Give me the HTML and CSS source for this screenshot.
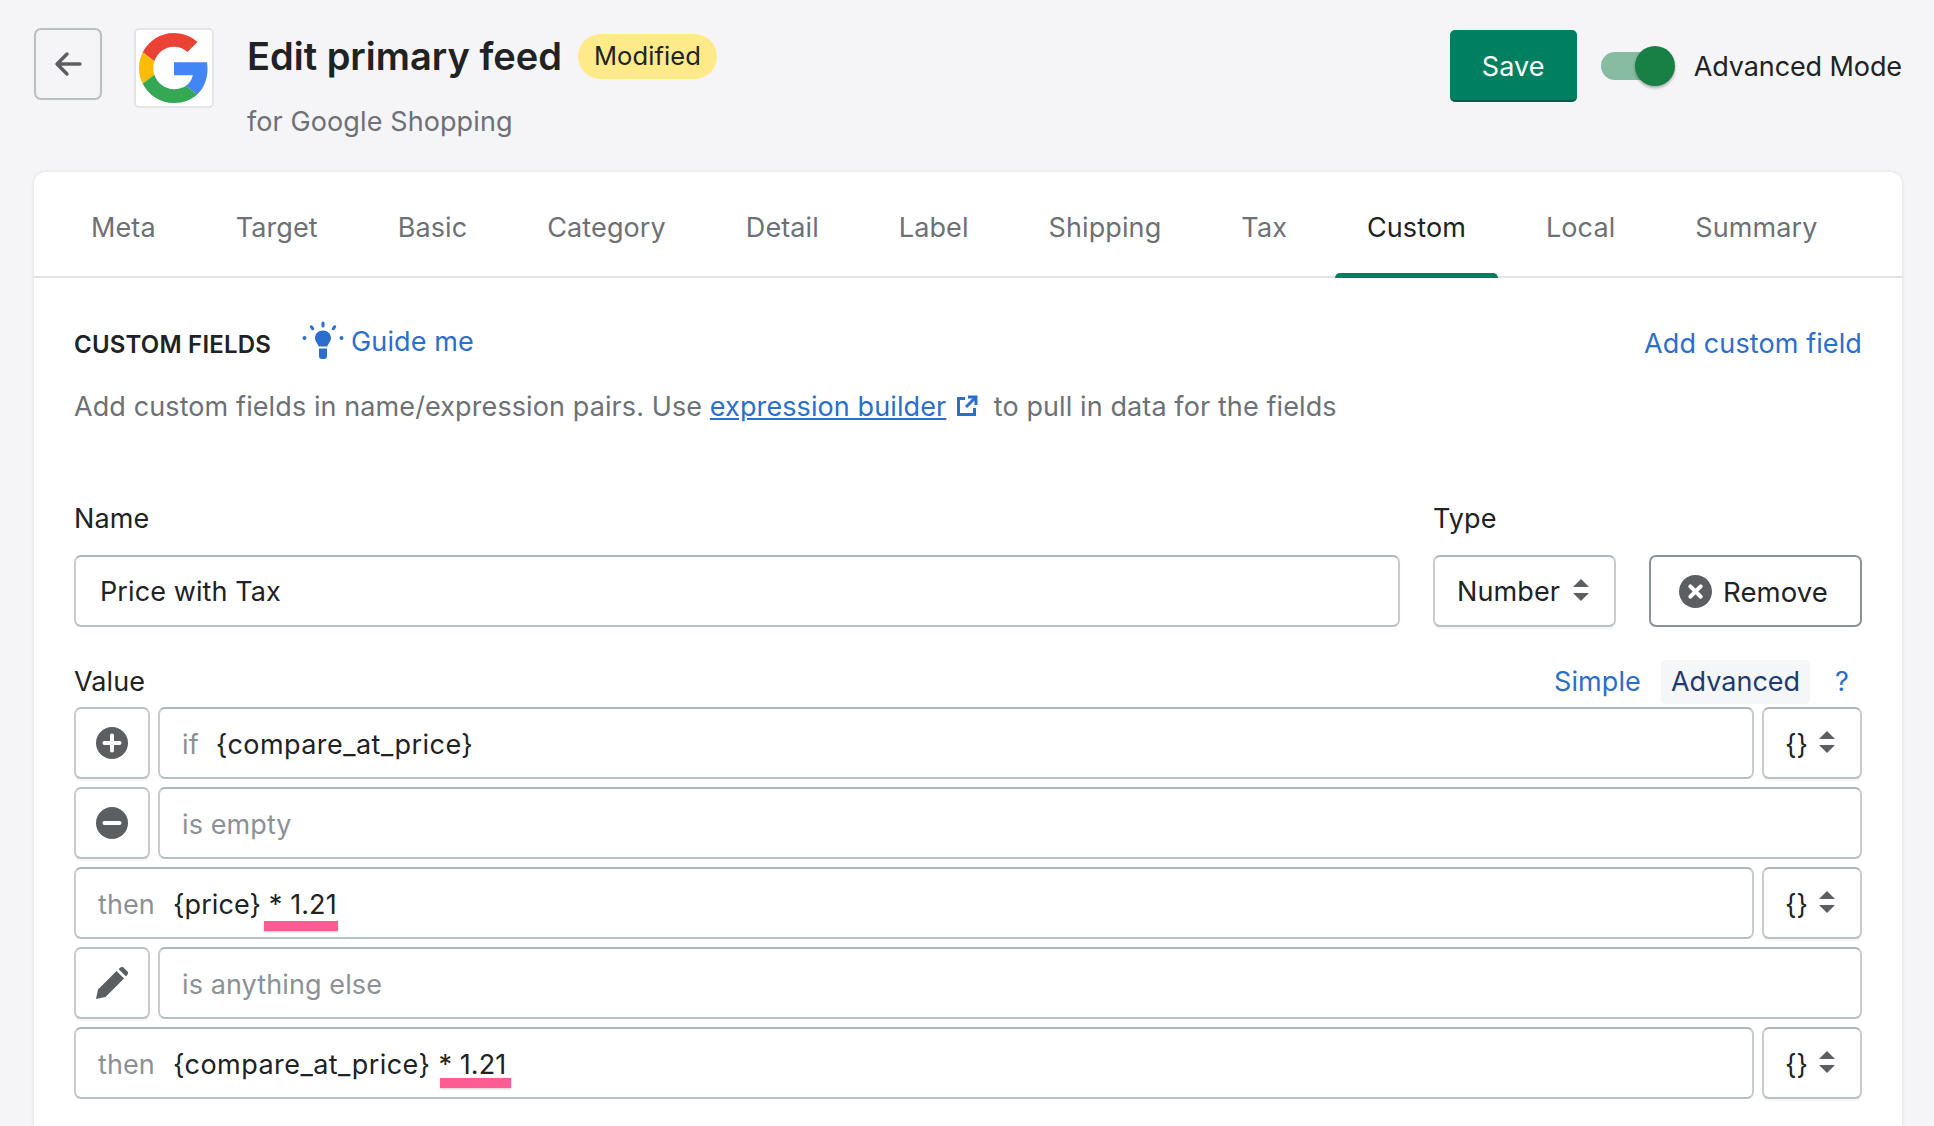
FILE: index.html
```html
<!DOCTYPE html>
<html lang="en">
<head>
    <meta charset="UTF-8">
    <meta name="viewport" content="width=device-width, initial-scale=1.0">
    <title>Edit primary feed</title>
    <link rel="stylesheet" href="styles.css">
</head>
<body>

    <header class="top">
        <button class="back">
            <svg viewBox="0 0 32 32" width="32" height="32"><path d="M28 16H6M15 6L5 16l10 10" fill="none" stroke="#5c5f62" stroke-width="3.4" stroke-linecap="round" stroke-linejoin="round"/></svg>
        </button>
        <div class="logo">
            <svg viewBox="0 0 48 48" width="70" height="70">
                <path fill="#EA4335" d="M24 9.5c3.54 0 6.71 1.22 9.21 3.6l6.85-6.85C35.9 2.38 30.47 0 24 0 14.62 0 6.51 5.38 2.56 13.22l7.98 6.19C12.43 13.72 17.74 9.5 24 9.5z"/>
                <path fill="#4285F4" d="M46.98 24.55c0-1.57-.15-3.09-.38-4.55H24v9.02h12.94c-.58 2.96-2.26 5.48-4.78 7.18l7.73 6c4.51-4.18 7.09-10.36 7.09-17.65z"/>
                <path fill="#FBBC05" d="M10.53 28.59c-.48-1.45-.76-2.99-.76-4.59s.27-3.14.76-4.59l-7.98-6.19C.92 16.46 0 20.12 0 24c0 3.88.92 7.54 2.56 10.78l7.97-6.19z"/>
                <path fill="#34A853" d="M24 48c6.48 0 11.93-2.13 15.89-5.81l-7.73-6c-2.15 1.45-4.92 2.3-8.16 2.3-6.26 0-11.57-4.22-13.47-9.91l-7.98 6.19C6.51 42.62 14.62 48 24 48z"/>
            </svg>
        </div>
        <div class="heading">
            <div class="title-row">
                <h1>Edit primary feed</h1>
                <span class="badge">Modified</span>
            </div>
            <div class="subtitle">for Google Shopping</div>
        </div>
        <div class="actions">
            <button class="save">Save</button>
            <div class="toggle"><span class="track"></span><span class="knob"></span></div>
            <span class="mode">Advanced Mode</span>
        </div>
    </header>

    <main class="card">
        <nav class="tabs">
            <a class="tab">Meta</a>
            <a class="tab">Target</a>
            <a class="tab">Basic</a>
            <a class="tab">Category</a>
            <a class="tab">Detail</a>
            <a class="tab">Label</a>
            <a class="tab">Shipping</a>
            <a class="tab">Tax</a>
            <a class="tab active">Custom</a>
            <a class="tab">Local</a>
            <a class="tab">Summary</a>
        </nav>

        <section class="content">
            <div class="section-head">
                <h2>Custom fields</h2>
                <a class="guide">
                    <svg viewBox="0 0 42 42" width="42" height="42" fill="#2c6ecb">
                        <path d="M21 9.500c-4.600 0-8 3.400-8 7.600 0 3.400 2.600 5 3.600 8.400h8.800c1-3.400 3.600-5 3.600-8.400 0-4.200-3.400-7.600-8-7.600z"/>
                        <path d="M17 27.500h8v7.500a3 3 0 0 1-3 3h-2a3 3 0 0 1-3-3z"/>
                        <rect x="19.500" y="0.500" width="3" height="6" rx="1.500"/>
                        <rect x="8.500" y="4" width="3" height="5.500" rx="1.500" transform="rotate(-35 10 6.700)"/>
                        <rect x="30.500" y="4" width="3" height="5.500" rx="1.500" transform="rotate(35 32 6.700)"/>
                        <circle cx="2.500" cy="17" r="2"/>
                        <circle cx="39.500" cy="17" r="2"/>
                    </svg>
                    Guide me
                </a>
                <a class="add-field">Add custom field</a>
            </div>
            <p class="help">
                Add custom fields in name/expression pairs. Use <a class="builder">expression builder</a>
                <svg class="ext" viewBox="0 0 22 22" width="22" height="22" fill="none" stroke="#2c6ecb" stroke-width="3"><path d="M9 3.500H2.500v16h16V13"/><path d="M12 2h8v8M20 2L10 12"/></svg>
                to pull in data for the fields
            </p>

            <div class="labels">
                <label class="name-label">Name</label>
                <label class="type-label">Type</label>
            </div>
            <div class="name-row">
                <div class="field grow">Price with Tax</div>
                <div class="field select">
                    Number
                    <svg class="carets" viewBox="0 0 16 24" width="16" height="24" fill="#5c5f62"><path d="M8 1l8 8H0zM8 23l8-8H0z"/></svg>
                </div>
                <button class="remove">
                    <svg viewBox="0 0 32 32" width="33" height="33"><circle cx="16" cy="16" r="16" fill="#5c5f62"/><path d="M11 11l10 10M21 11L11 21" stroke="#fff" stroke-width="4" stroke-linecap="round"/></svg>
                    <span class="remove-text">Remove</span>
                </button>
            </div>

            <div class="value-head">
                <label>Value</label>
                <div class="modes">
                    <a class="mode-link">Simple</a>
                    <a class="mode-link current">Advanced</a>
                    <a class="mode-link help-link">?</a>
                </div>
            </div>

            <div class="rows">
                <div class="row">
                    <button class="icon-btn">
                        <svg viewBox="0 0 32 32" width="32" height="32"><circle cx="16" cy="16" r="16" fill="#5c5f62"/><path d="M16 8.500v15M8.500 16h15" stroke="#fff" stroke-width="4" stroke-linecap="round"/></svg>
                    </button>
                    <div class="field grow expr"><span class="muted gap-if">if</span><span class="long-var">{compare_at_price}</span></div>
                    <div class="field brace">{}<svg class="carets" viewBox="0 0 16 24" width="16" height="24" fill="#5c5f62"><path d="M8 1l8 8H0zM8 23l8-8H0z"/></svg></div>
                </div>
                <div class="row">
                    <button class="icon-btn">
                        <svg viewBox="0 0 32 32" width="32" height="32"><circle cx="16" cy="16" r="16" fill="#5c5f62"/><path d="M8.500 16h15" stroke="#fff" stroke-width="4" stroke-linecap="round"/></svg>
                    </button>
                    <div class="field grow expr muted">is empty</div>
                </div>
                <div class="row">
                    <div class="field grow expr"><span class="muted gap-then">then</span>{price} <span class="mark mark-a">* 1.21</span></div>
                    <div class="field brace">{}<svg class="carets" viewBox="0 0 16 24" width="16" height="24" fill="#5c5f62"><path d="M8 1l8 8H0zM8 23l8-8H0z"/></svg></div>
                </div>
                <div class="row">
                    <button class="icon-btn">
                        <svg viewBox="0 0 32 32" width="32" height="32" fill="#5c5f62"><path d="M0 32l2-9.500L20.500 4l7.500 7.500L9.500 30z"/><path d="M22.500 2l2-1.500a2.500 2.500 0 0 1 3 0l4 4a2.500 2.500 0 0 1 0 3l-1.500 2z"/></svg>
                    </button>
                    <div class="field grow expr muted">is anything else</div>
                </div>
                <div class="row">
                    <div class="field grow expr"><span class="muted gap-then">then</span><span class="long-var">{compare_at_price}</span><span class="mark mark-b">* 1.21</span></div>
                    <div class="field brace">{}<svg class="carets" viewBox="0 0 16 24" width="16" height="24" fill="#5c5f62"><path d="M8 1l8 8H0zM8 23l8-8H0z"/></svg></div>
                </div>
            </div>
        </section>
    </main>

</body>
</html>
```

FILE: styles.css
```css
* {
    box-sizing: border-box;
}
html, body {
    height: 100%;
}
body {
    margin: 0;
    display: flex;
    flex-direction: column;
    overflow: hidden;
    background-color: #f5f5f8;
    color: #202223;
    font-family: Inter, "Liberation Sans", sans-serif;
    font-size: 27px;
    letter-spacing: 0.1px;
    line-height: 36px;
}
button {
    font: inherit;
    letter-spacing: inherit;
    color: inherit;
    cursor: pointer;
}

/* Page header */
.top {
    flex: none;
    height: 172px;
    padding: 28px 32px 0 34px;
    display: flex;
    align-items: flex-start;
}
.back {
    width: 68px;
    height: 72px;
    padding: 0;
    display: flex;
    align-items: center;
    justify-content: center;
    background: transparent;
    border: 2px solid #babfc3;
    border-radius: 7px;
}
.logo {
    width: 80px;
    height: 80px;
    margin-left: 32px;
    display: flex;
    align-items: center;
    justify-content: center;
    background: #fff;
    border: 2px solid #e4e5e7;
    border-radius: 5px;
}
.heading {
    margin-left: 33px;
}
.title-row {
    display: flex;
    align-items: center;
    gap: 16px;
    margin-top: 5px;
}
h1 {
    margin: 0;
    font-size: 38px;
    letter-spacing: 0;
    line-height: 46px;
    font-weight: 600;
}
.badge {
    height: 45px;
    padding: 0 16px;
    display: flex;
    align-items: center;
    background: #ffea8a;
    border-radius: 23px;
    font-size: 25.5px;
}
.subtitle {
    margin-top: 25px;
    color: #6d7175;
}
.actions {
    margin-left: auto;
    margin-top: 2px;
    display: flex;
    align-items: center;
}
.save {
    width: 127px;
    height: 72px;
    padding: 3px 0 0;
    color: #fff;
    background: #008060;
    border: none;
    border-bottom: 2px solid #005e46;
    border-radius: 5px;
}
.toggle {
    position: relative;
    width: 74px;
    height: 40px;
    margin-left: 24px;
}
.track {
    position: absolute;
    left: 0;
    top: 6px;
    width: 64px;
    height: 28px;
    background: #87bca1;
    border-radius: 14px;
}
.knob {
    position: absolute;
    right: 0;
    top: 0;
    width: 40px;
    height: 40px;
    background: #188044;
    border-radius: 50%;
    box-shadow: 0 2px 3px rgba(0, 0, 0, 0.3);
}
.mode {
    margin-left: 19px;
    margin-top: 2px;
    letter-spacing: -0.1px;
}

/* Card */
.card {
    flex: 1;
    margin: 0 32px 0 34px;
    background: #fff;
    border-radius: 12px 12px 0 0;
    box-shadow: 0 0 4px rgba(23, 24, 24, 0.1);
}
.tabs {
    height: 106px;
    padding: 8px 25px 0;
    display: flex;
    gap: 16px;
    border-bottom: 2px solid #e1e3e5;
}
.tab {
    position: relative;
    padding: 0 32px;
    display: flex;
    align-items: center;
    color: #6d7175;
}
.tab.active {
    color: #202223;
}
.tab.active::after {
    content: "";
    position: absolute;
    left: 0;
    right: 0;
    bottom: -2px;
    height: 5px;
    background: #008060;
    border-radius: 5px 5px 0 0;
}

/* Section */
.content {
    padding: 43px 40px 0;
}
.section-head {
    height: 46px;
    display: flex;
    align-items: center;
}
h2 {
    margin: 2px 0 0;
    font-size: 24px;
    letter-spacing: 0.2px;
    font-weight: 600;
    text-transform: uppercase;
}
.guide {
    margin-left: 31px;
    margin-top: -5px;
    display: flex;
    align-items: center;
    gap: 7px;
    color: #2c6ecb;
}
.add-field {
    margin-left: auto;
    color: #2c6ecb;
}
.help {
    margin: 22px 0 0;
    color: #6d7175;
}
.builder {
    color: #2c6ecb;
    text-decoration: underline;
}
.ext {
    margin: 0 8px 0 2px;
    vertical-align: -1px;
}
.labels {
    margin-top: 76px;
    display: flex;
}
.name-label {
    width: 1359px;
}
.name-row {
    margin-top: 18px;
    display: flex;
    gap: 33px;
}
.field {
    height: 72px;
    padding: 2px 24px 0;
    display: flex;
    align-items: center;
    background: #fff;
    border: 2px solid #c9cccf;
    border-top-color: #aeb4b9;
    border-bottom-color: #babfc3;
    border-radius: 7px;
}
.grow {
    flex: 1;
}
.select {
    width: 183px;
    flex: none;
    gap: 13px;
    padding-left: 22px;
    box-shadow: 0 2px 1px rgba(22, 29, 37, 0.05);
}
.remove {
    width: 213px;
    height: 72px;
    flex: none;
    padding: 0 4px 0 0;
    display: flex;
    align-items: center;
    justify-content: center;
    gap: 11px;
    background: #fff;
    border: 2px solid #8c9196;
    border-radius: 7px;
}
.remove-text {
    padding-top: 2px;
    font-size: 27.5px;
}
.value-head {
    height: 44px;
    margin-top: 33px;
    display: flex;
    align-items: center;
    justify-content: space-between;
}
.modes {
    display: flex;
    align-items: center;
    margin-right: 13px;
}
.mode-link {
    color: #2c6ecb;
}
.current {
    margin-left: 20px;
    padding: 4px 10px;
    letter-spacing: 0;
    color: #1f3a6e;
    background: #f5f6f8;
    border-radius: 5px;
}
.help-link {
    margin-left: 25px;
}
.rows {
    margin-top: 3px;
    display: flex;
    flex-direction: column;
    gap: 8px;
}
.row {
    display: flex;
    gap: 8px;
}
.icon-btn {
    width: 76px;
    height: 72px;
    flex: none;
    padding: 0;
    display: flex;
    align-items: center;
    justify-content: center;
    background: #fff;
    border: 2px solid #c9cccf;
    border-top-color: #babfc3;
    border-bottom-color: #babfc3;
    border-radius: 7px;
    box-shadow: 0 2px 1px rgba(22, 29, 37, 0.05);
}
.expr {
    padding-left: 22px;
    padding-top: 4px;
    white-space: pre;
}
.long-var {
    letter-spacing: 0.45px;
}
.brace {
    width: 100px;
    flex: none;
    padding: 4px 0 0 21px;
    gap: 11px;
    box-shadow: 0 2px 1px rgba(22, 29, 37, 0.05);
}
.carets {
    margin-bottom: 4px;
}
.brace .carets {
    margin-bottom: 6px;
}
.muted {
    color: #8c9196;
}
.gap-if {
    margin-right: 17px;
}
.gap-then {
    margin-right: 18px;
}
.mark {
    position: relative;
}
.mark::after {
    content: "";
    position: absolute;
    top: 34px;
    height: 10px;
    background: #ff5c93;
    box-shadow: 0 1px 2px rgba(0, 0, 0, 0.2);
}
.mark-a::after {
    left: -5px;
    right: -1px;
}
.mark-b {
    margin-left: 8px;
}
.mark-b::after {
    top: 31px;
    left: 2px;
    right: -5px;
}
```
